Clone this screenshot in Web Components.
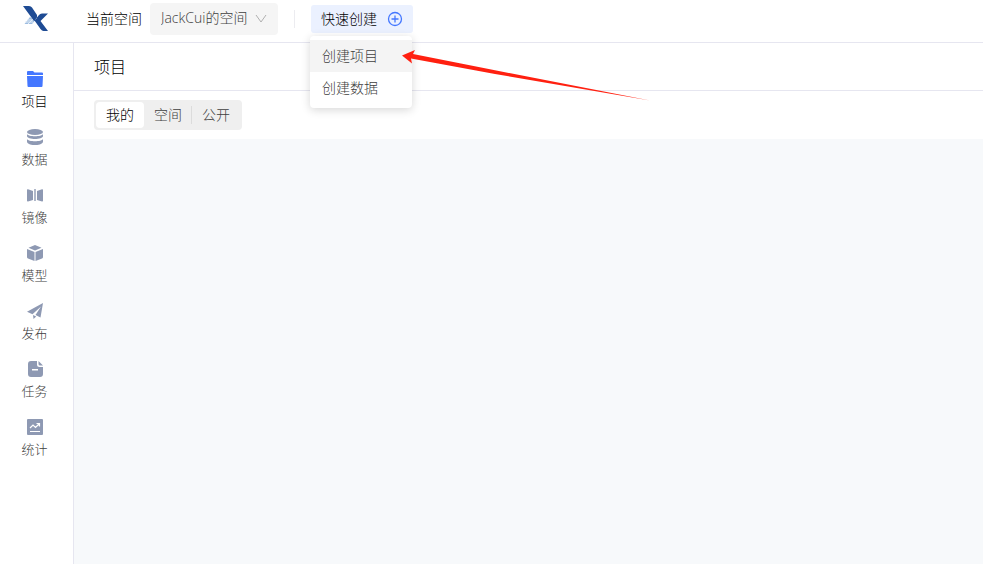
<!DOCTYPE html>
<html lang="zh-CN">
<head>
<meta charset="utf-8">
<title>项目</title>
<style>
    body {
        margin: 0;
        font: 300 14px/20px "Open Sans", "Noto Sans CJK SC", sans-serif;
        color: #000;
        --line: #e6e6f0;
        --strong: #000;
        --muted: #404040;
        --icon: #8e99b3;
        --brand: #4477ff;
    }
</style>
</head>
<body>
<app-shell>
    <brand-logo slot="logo"></brand-logo>
    <space-picker slot="top" label="当前空间">JackCui的空间</space-picker>
    <quick-create slot="top" label="快速创建">
        <menu-option active>创建项目</menu-option>
        <menu-option>创建数据</menu-option>
    </quick-create>

    <nav-item slot="nav" icon="folder" active>项目</nav-item>
    <nav-item slot="nav" icon="data">数据</nav-item>
    <nav-item slot="nav" icon="mirror">镜像</nav-item>
    <nav-item slot="nav" icon="cube">模型</nav-item>
    <nav-item slot="nav" icon="plane">发布</nav-item>
    <nav-item slot="nav" icon="task">任务</nav-item>
    <nav-item slot="nav" icon="chart">统计</nav-item>

    <page-title>项目</page-title>
    <segment-bar>
        <segment-tab active>我的</segment-tab>
        <segment-tab>空间</segment-tab>
        <segment-tab divided>公开</segment-tab>
    </segment-bar>
</app-shell>
<pointer-arrow></pointer-arrow>

<script>
// Filled 16x16 glyphs, white details are gaps cut into the shape
const ICONS = {
    folder: `<path d="M1 0h5l1.500 1.500H15q1 0 1 1V4H0V1q0-1 1-1zM0 5h16l-.5 10q0 1-1 1h-13q-1 0-1-1z"/>`,
    data: `<ellipse cx="8" cy="3" rx="8" ry="3"/>
        <path d="M0 5c1 3 15 3 16 0v2c0 4-16 4-16 0zM0 10c1 3 15 3 16 0v2.500c0 4.700-16 4.700-16 0z"/>`,
    mirror: `<path d="M0 3q0-1 1-.7L6 4v9l-5 1.500q-1 .2-1-.8zM16 3q0-1-1-.7L10 4v9l5 1.500q1 .2 1-.8zM7.300 2h1.400v12H7.300z"/>`,
    cube: `<path d="M8 0l6.500 2.800L8 5.600 1.500 2.800zM0 4l7.500 3v9L1 13.500q-1-.4-1-1.500zM16 4L8.500 7v9l6.500-2.500q1-.4 1-1.500z"/>`,
    plane: `<path d="M16 0l-2.500 14.500L8.500 12 14 3.500 5.500 11.300 0 8.700zM6 12l3.200 1.500L6.500 16z"/>`,
    task: `<path fill-rule="evenodd" d="M4 0h6v3.500Q10 6 12.500 6H16v7q0 3-3 3H4q-3 0-3-3V3q0-3 3-3zM5 8v1.600h6V8z"/><path d="M11.500 0L16 4.500h-3q-1.500 0-1.500-1.500z"/>`,
    chart: `<rect width="16" height="16" rx="1"/><path d="M3 9l3-3 2.500 2.500L12 5M9.500 4.500h3v3M3 12.500h10" fill="none" stroke="#fff" stroke-width="1.200"/>`,
};

function define(name, render) {
    customElements.define(name, class extends HTMLElement {
        constructor() { super(); this.attachShadow({ mode: "open" }); }
        connectedCallback() { this.shadowRoot.innerHTML = render(this); }
    });
}

define("app-shell", () => `<style>
    :host{display:grid;grid-template:auto 1fr / 74px 1fr;min-height:100vh;background:#fff}
    header{grid-column:1 / -1;display:flex;align-items:center;box-sizing:border-box;height:43px;padding-bottom:4px;border-bottom:1px solid var(--line)}
    .logo{display:flex;justify-content:center;width:72px;margin-right:14px}
    .top{display:flex;align-items:center}
    aside{box-sizing:border-box;padding:26px 4px 0 0;border-right:1px solid var(--line)}
    nav{display:flex;flex-direction:column;gap:16px}
    main{min-width:0;background:#f7f9fb}
</style>
<header>
    <div class="logo"><slot name="logo"></slot></div>
    <div class="top"><slot name="top"></slot></div>
</header>
<aside><nav><slot name="nav"></slot></nav></aside>
<main><slot></slot></main>`);

define("brand-logo", () => `<style>
    :host{display:block}
    svg{display:block}
</style>
<svg width="26" height="26" viewBox="0 0 26 26" fill="#1e4b94">
    <path d="M7 11L1.500 18H9l3-3.500z" fill="#9dbce0"/>
    <path d="M2 16h8M4 14h7M5 18l5-5" stroke="#e3edf7" fill="none"/>
    <path d="M0 0h6q2 0 3 1.500l5 7.500v3l-3 3zM25 7.500h-6q-2 0-3 1.500l-4.500 5.500 6 8.500q1.500 2 3 2H25l-7.500-10z"/>
</svg>`);

define("space-picker", el => `<style>
    :host{display:flex;align-items:center;gap:8px;padding-right:16px}
    :host::after{content:"";width:1px;height:18px;margin-left:8px;background:#ececf0}
    .box{display:grid;align-items:center;width:128px}
    select,svg{grid-area:1 / 1}
    select{appearance:none;width:100%;height:32px;padding:0 28px 2px 11px;border:0;border-radius:4px;background:#f5f5f5;color:var(--muted);font:inherit}
    svg{justify-self:end;margin-right:11px;pointer-events:none}
</style>
<label for="space">${el.getAttribute("label")}</label>
<div class="box">
    <select id="space"><option>${el.textContent}</option></select>
    <svg width="12" height="12" viewBox="0 0 12 12" fill="none" stroke="#b0b0b0"><path d="M1 2l5 7 5-7"/></svg>
</div>`);

define("quick-create", el => `<style>
    :host{display:block;position:relative}
    button{display:flex;align-items:center;gap:10px;height:28px;padding:0 10px;border:0;border-radius:3px;background:#ebf1ff;color:inherit;font:inherit}
    .menu{position:absolute;top:31px;left:-1px;right:1px;padding:4px 0;border-radius:4px;background:#fff;box-shadow:0 2px 10px rgba(0,0,0,.16)}
</style>
<button type="button" aria-haspopup="menu" aria-expanded="true">${el.getAttribute("label")}
    <svg width="16" height="16" viewBox="0 0 16 16" fill="none" stroke="var(--brand)" stroke-width="1.300"><circle cx="8" cy="8" r="6.500"/><path d="M8 4.500v7M4.500 8h7"/></svg>
</button>
<div class="menu"><slot></slot></div>`);

define("menu-option", () => `<style>
    :host{display:block}
    button{display:block;width:100%;height:32px;padding:0 12px;border:0;background:none;color:var(--muted);font:inherit;text-align:left}
    :host([active]) button{background:#f4f4f4}
</style>
<button type="button"><slot></slot></button>`);

define("nav-item", el => `<style>
    :host{display:block}
    a{display:flex;flex-direction:column;align-items:center;gap:4px;padding-top:2px;color:var(--muted);font-size:13px;line-height:20px;text-decoration:none}
    svg{fill:var(--icon)}
    :host([active]) a{color:var(--strong)}
    :host([active]) svg{fill:var(--brand)}
</style>
<a href="#${el.getAttribute("icon")}">
    <svg width="16" height="16" viewBox="0 0 16 16">${ICONS[el.getAttribute("icon")]}</svg>
    <slot></slot>
</a>`);

define("page-title", () => `<style>
    :host{display:block;background:#fff;border-bottom:1px solid var(--line)}
    h1{margin:0;padding:12px 20px 11px;font-size:16px;font-weight:inherit;line-height:24px}
</style>
<h1><slot></slot></h1>`);

define("segment-bar", () => `<style>
    :host{display:block;padding:9px 20px;background:#fff}
    div{display:inline-flex;padding:2px;border-radius:4px;background:#efefef;vertical-align:top}
</style>
<div><slot></slot></div>`);

define("segment-tab", () => `<style>
    :host{display:flex;align-items:center}
    button{height:26px;padding:0 10px;border:0;border-radius:4px;background:none;color:var(--muted);font:inherit}
    :host([active]) button{background:#fff;color:var(--strong)}
    :host([divided])::before{content:"";width:1px;height:18px;margin-left:-1px;background:#dcdcdc}
</style>
<button type="button"><slot></slot></button>`);

// Red arrow that points at the first menu entry
define("pointer-arrow", () => `<style>
    :host{position:absolute;top:50px;left:402px;pointer-events:none}
    svg{display:block}
</style>
<svg width="248" height="51" viewBox="0 0 248 51" fill="#ff2010">
    <path d="M0 5.500L13 0l-2 4 82 16.300L248 50.500 93 24 9 8.500l1 5z"/>
</svg>`);
</script>
</body>
</html>
